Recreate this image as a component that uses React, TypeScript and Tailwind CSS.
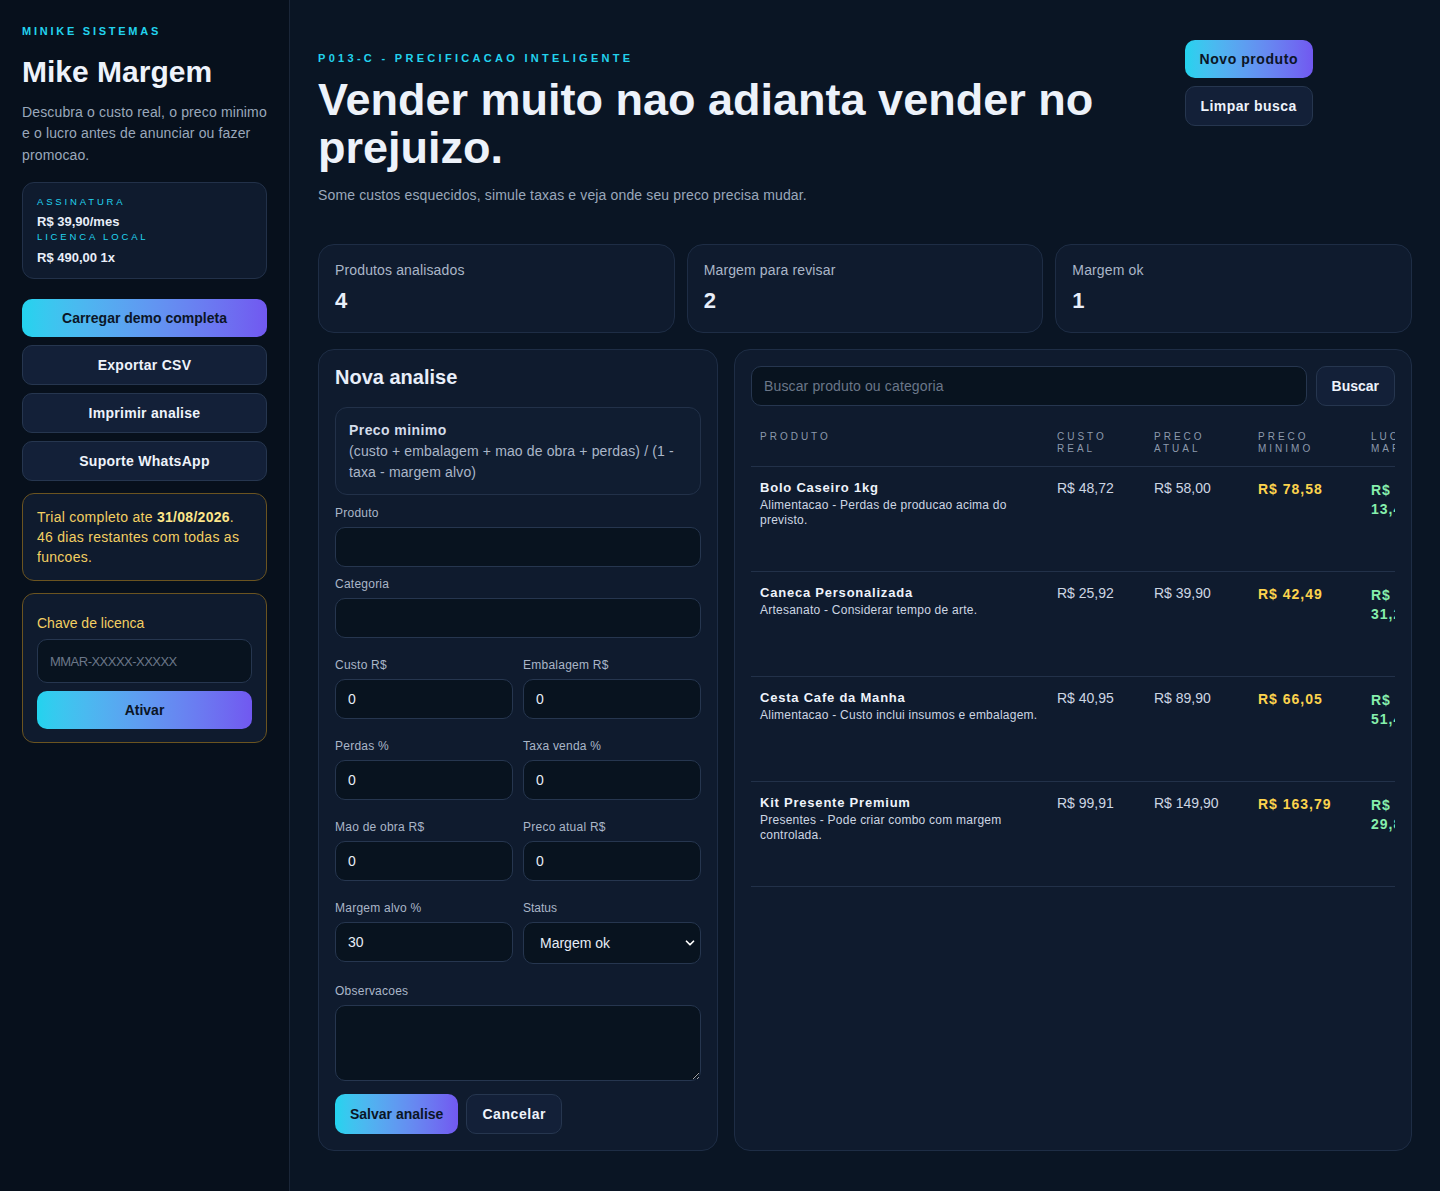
import { ChevronDown } from "lucide-react"

const produtos = [
  {
    nome: "Bolo Caseiro 1kg",
    desc: "Alimentacao - Perdas de producao acima do previsto.",
    custo: "R$ 48,72",
    atual: "R$ 58,00",
    minimo: "R$ 78,58",
    lucro: "R$ 13,47",
  },
  {
    nome: "Caneca Personalizada",
    desc: "Artesanato - Considerar tempo de arte.",
    custo: "R$ 25,92",
    atual: "R$ 39,90",
    minimo: "R$ 42,49",
    lucro: "R$ 31,20",
  },
  {
    nome: "Cesta Cafe da Manha",
    desc: "Alimentacao - Custo inclui insumos e embalagem.",
    custo: "R$ 40,95",
    atual: "R$ 89,90",
    minimo: "R$ 66,05",
    lucro: "R$ 51,40",
  },
  {
    nome: "Kit Presente Premium",
    desc: "Presentes - Pode criar combo com margem controlada.",
    custo: "R$ 99,91",
    atual: "R$ 149,90",
    minimo: "R$ 163,79",
    lucro: "R$ 29,85",
  },
]

const stats = [
  { label: "Produtos analisados", value: "4" },
  { label: "Margem para revisar", value: "2" },
  { label: "Margem ok", value: "1" },
]

function Field({ label, value = "" }: { label: string; value?: string }) {
  return (
    <label className="flex flex-col">
      <span className="mb-1.5 text-xs leading-4 tracking-[0.02em] text-[#aab6c8]">{label}</span>
      <input
        readOnly
        value={value}
        className="h-10 w-full rounded-[10px] border border-[#26364f] bg-[#08131f] px-3 text-sm text-[#e6edf7] outline-none"
      />
    </label>
  )
}

export default function App() {
  return (
    <div className="flex min-h-[1191px] bg-[#0a1524] text-[#e8eef9] [font-family:'Liberation_Sans',Arial,sans-serif]">
      {/* barra lateral */}
      <aside className="w-[290px] shrink-0 border-r border-[#1a2638] bg-[#07101c] px-[22px] pt-[23px]">
        <div className="text-[11px] font-bold uppercase tracking-[0.25em] text-[#22d3ee]">Minike Sistemas</div>
        <h1 className="mt-[14px] text-[30px] font-bold leading-9 text-[#eef3fb]">Mike Margem</h1>
        <p className="mt-[12px] text-sm leading-[21.5px] tracking-[0.01em] text-[#9aa8bb]">
          Descubra o custo real, o preco minimo e o lucro antes de anunciar ou fazer promocao.
        </p>

        <div className="mt-[16px] rounded-xl border border-[#223149] bg-[#0f1b2e] px-[14px] pb-[12px] pt-[13px]">
          <div className="text-[9.5px] uppercase leading-3 tracking-[0.3em] text-[#22d3ee]">Assinatura</div>
          <div className="mt-[6px] text-[13px] font-bold leading-4">R$ 39,90/mes</div>
          <div className="mt-[1px] text-[9.5px] uppercase leading-3 tracking-[0.3em] text-[#22d3ee]">Licenca local</div>
          <div className="mt-[7px] text-[13px] font-bold leading-4">R$ 490,00 1x</div>
        </div>

        <div className="mt-[20px] flex flex-col gap-2">
          <button className="h-[38px] rounded-[10px] bg-gradient-to-r from-[#22d3ee] to-[#7158f0] text-sm font-bold text-[#0b1526]">
            Carregar demo completa
          </button>
          {["Exportar CSV", "Imprimir analise", "Suporte WhatsApp"].map((b) => (
            <button
              key={b}
              className="h-10 rounded-[10px] border border-[#26364f] bg-[#132038] text-sm font-bold tracking-[0.02em] text-[#eef3fb]"
            >
              {b}
            </button>
          ))}
        </div>

        <div className="mt-3 rounded-xl border border-[#6b5420] bg-[#0f1b2e] px-[14px] py-[13px] text-sm leading-5 tracking-[0.02em] text-[#f3cf62]">
          Trial completo ate <b className="text-[#fde68a]">31/08/2026</b>. 46 dias restantes com todas as funcoes.
        </div>

        <div className="mt-3 rounded-xl border border-[#6b5420] bg-[#0f1b2e] px-[14px] pb-[13px] pt-[19px]">
          <div className="text-sm leading-5 text-[#f3cf62]">Chave de licenca</div>
          <input
            readOnly
            placeholder="MMAR-XXXXX-XXXXX"
            className="mt-[6px] h-[44px] w-full rounded-[10px] border border-[#26364f] bg-[#08131f] px-3 text-[13px] tracking-[-0.04em] text-[#e6edf7] outline-none placeholder:text-[#6b7789]"
          />
          <button className="mt-2 h-[38px] w-full rounded-[10px] bg-gradient-to-r from-[#22d3ee] to-[#7158f0] text-sm font-bold text-[#0b1526]">
            Ativar
          </button>
        </div>
      </aside>

      {/* conteudo */}
      <main className="flex-1 px-7 pb-10 pt-10">
        <header className="flex items-start justify-between gap-6">
          <div className="max-w-[842px] pt-[10px]">
            <div className="text-[11px] font-bold uppercase leading-4 tracking-[0.3em] text-[#22d3ee]">
              P013-C - Precificacao inteligente
            </div>
            <h2 className="mt-[10px] text-[45px] font-bold leading-[48px] text-[#edf2fa]">
              Vender muito nao adianta vender no prejuizo.
            </h2>
            <p className="mt-[13px] text-sm leading-5 tracking-[0.01em] text-[#9aa8bb]">
              Some custos esquecidos, simule taxas e veja onde seu preco precisa mudar.
            </p>
          </div>
          <div className="mr-[99px] flex flex-col items-start gap-2">
            <button className="h-[38px] rounded-[10px] bg-gradient-to-r from-[#22d3ee] to-[#7158f0] px-[15px] text-sm font-bold tracking-[0.04em] text-[#0b1526]">
              Novo produto
            </button>
            <button className="h-10 rounded-[10px] border border-[#26364f] bg-[#132038] px-[15px] text-sm font-bold tracking-[0.03em] text-[#eef3fb]">
              Limpar busca
            </button>
          </div>
        </header>

        <section className="mt-[39px] grid grid-cols-3 gap-3">
          {stats.map((s) => (
            <div key={s.label} className="h-[89px] rounded-2xl border border-[#1e2d45] bg-[#0f1b2e] px-4 pt-[15px]">
              <div className="text-sm leading-5 tracking-[0.01em] text-[#aab6c8]">{s.label}</div>
              <div className="mt-[7px] text-[22px] font-bold leading-7">{s.value}</div>
            </div>
          ))}
        </section>

        <section className="mt-4 grid grid-cols-[400px_1fr] gap-4">
          {/* formulario */}
          <div className="rounded-2xl border border-[#1e2d45] bg-[#0f1b2e] px-4 pb-[16px] pt-[13px]">
            <h3 className="text-xl font-bold leading-7">Nova analise</h3>
            <div className="mt-[16px] rounded-xl border border-[#223149] bg-[#101d31] px-[13px] pb-[11px] pt-[12px]">
              <div className="text-sm font-bold leading-5 tracking-[0.03em] text-[#d3dcea]">Preco minimo</div>
              <div className="mt-[1px] text-sm leading-[21px] tracking-[0.01em] text-[#aab6c8]">
                (custo + embalagem + mao de obra + perdas) / (1 - taxa - margem alvo)
              </div>
            </div>

            <div className="mt-[10px] flex flex-col gap-[9px]">
              <Field label="Produto" />
              <Field label="Categoria" />
              <div className="mt-[10px] grid grid-cols-2 gap-x-[10px] gap-y-[19px]">
                <Field label="Custo R$" value="0" />
                <Field label="Embalagem R$" value="0" />
                <Field label="Perdas %" value="0" />
                <Field label="Taxa venda %" value="0" />
                <Field label="Mao de obra R$" value="0" />
                <Field label="Preco atual R$" value="0" />
                <Field label="Margem alvo %" value="30" />
                <label className="flex flex-col">
                  <span className="mb-1.5 text-xs leading-4 text-[#aab6c8]">Status</span>
                  <div className="relative">
                    <div className="flex h-[42px] items-center rounded-[10px] border border-[#26364f] bg-[#08131f] px-4 text-sm text-[#e6edf7]">
                      Margem ok
                    </div>
                    <ChevronDown className="absolute right-[4px] top-[14px] h-[14px] w-[14px] text-white" strokeWidth={3} />
                  </div>
                </label>
              </div>
              <label className="mt-[10px] flex flex-col">
                <span className="mb-1.5 text-xs leading-4 tracking-[0.02em] text-[#aab6c8]">Observacoes</span>
                <textarea
                  readOnly
                  className="h-[76px] w-full rounded-[10px] border border-[#26364f] bg-[#08131f] px-3 py-2 text-sm outline-none"
                />
              </label>
            </div>

            <div className="mt-[13px] flex gap-2">
              <button className="h-10 rounded-[10px] bg-gradient-to-r from-[#22d3ee] to-[#7158f0] px-[15px] text-sm font-bold text-[#0b1526]">
                Salvar analise
              </button>
              <button className="h-10 rounded-[10px] border border-[#26364f] bg-[#132038] px-[15px] text-sm font-bold tracking-[0.04em] text-[#eef3fb]">
                Cancelar
              </button>
            </div>
          </div>

          {/* tabela */}
          <div className="min-w-0 rounded-2xl border border-[#1e2d45] bg-[#0f1b2e] p-4">
            <div className="flex gap-[9px]">
              <input
                readOnly
                placeholder="Buscar produto ou categoria"
                className="h-10 flex-1 rounded-[10px] border border-[#26364f] bg-[#08131f] px-3 text-sm tracking-[0.01em] outline-none placeholder:text-[#6b7789]"
              />
              <button className="h-10 rounded-[10px] border border-[#26364f] bg-[#132038] px-[15px] text-sm font-bold text-[#eef3fb]">
                Buscar
              </button>
            </div>

            <div className="mt-[15px] overflow-hidden">
              <table className="w-[900px] table-fixed border-collapse text-left">
                <colgroup>
                  <col className="w-[297px]" />
                  <col className="w-[97px]" />
                  <col className="w-[104px]" />
                  <col className="w-[113px]" />
                  <col className="w-[60px]" />
                  <col className="w-[229px]" />
                </colgroup>
                <thead>
                  <tr className="border-b border-[#223149] align-top text-[10px] uppercase leading-3 tracking-[0.3em] text-[#8c99ac]">
                    <th className="px-[9px] pb-[11px] pt-[10px] font-normal">Produto</th>
                    <th className="px-[9px] pb-[11px] pt-[10px] font-normal">
                      Custo
                      <br />
                      real
                    </th>
                    <th className="px-[9px] pb-[11px] pt-[10px] font-normal">
                      Preco
                      <br />
                      atual
                    </th>
                    <th className="px-[9px] pb-[11px] pt-[10px] font-normal">
                      Preco
                      <br />
                      minimo
                    </th>
                    <th className="px-[9px] pb-[11px] pt-[10px] font-normal">
                      Lucro
                      <br />
                      margem
                    </th>
                    <th className="px-[9px] pb-[11px] pt-[10px] font-normal">Status</th>
                  </tr>
                </thead>
                <tbody>
                  {produtos.map((p) => (
                    <tr key={p.nome} className="h-[105px] border-b border-[#223149] align-top">
                      <td className="px-[9px] pt-[13px]">
                        <div className="text-[13px] font-bold leading-4 tracking-[0.06em] text-[#eef3fb]">{p.nome}</div>
                        <div className="mt-[2px] text-xs leading-[15px] tracking-[0.02em] text-[#cdd6e3]">{p.desc}</div>
                      </td>
                      <td className="px-[9px] pt-[13px] text-sm leading-4 text-[#cdd6e3]">{p.custo}</td>
                      <td className="px-[9px] pt-[13px] text-sm leading-4 text-[#cdd6e3]">{p.atual}</td>
                      <td className="px-[9px] pt-[14px] text-sm font-bold leading-4 tracking-[0.07em] text-[#fcd34d]">
                        {p.minimo}
                      </td>
                      <td className="px-[9px] pt-[14px] text-sm font-bold leading-[19px] tracking-[0.07em] text-[#86efac]">
                        {p.lucro}
                      </td>
                      <td className="px-[9px] pt-[13px] text-xs text-[#cdd6e3]">Revisar</td>
                    </tr>
                  ))}
                </tbody>
              </table>
            </div>
          </div>
        </section>
      </main>
    </div>
  )
}
